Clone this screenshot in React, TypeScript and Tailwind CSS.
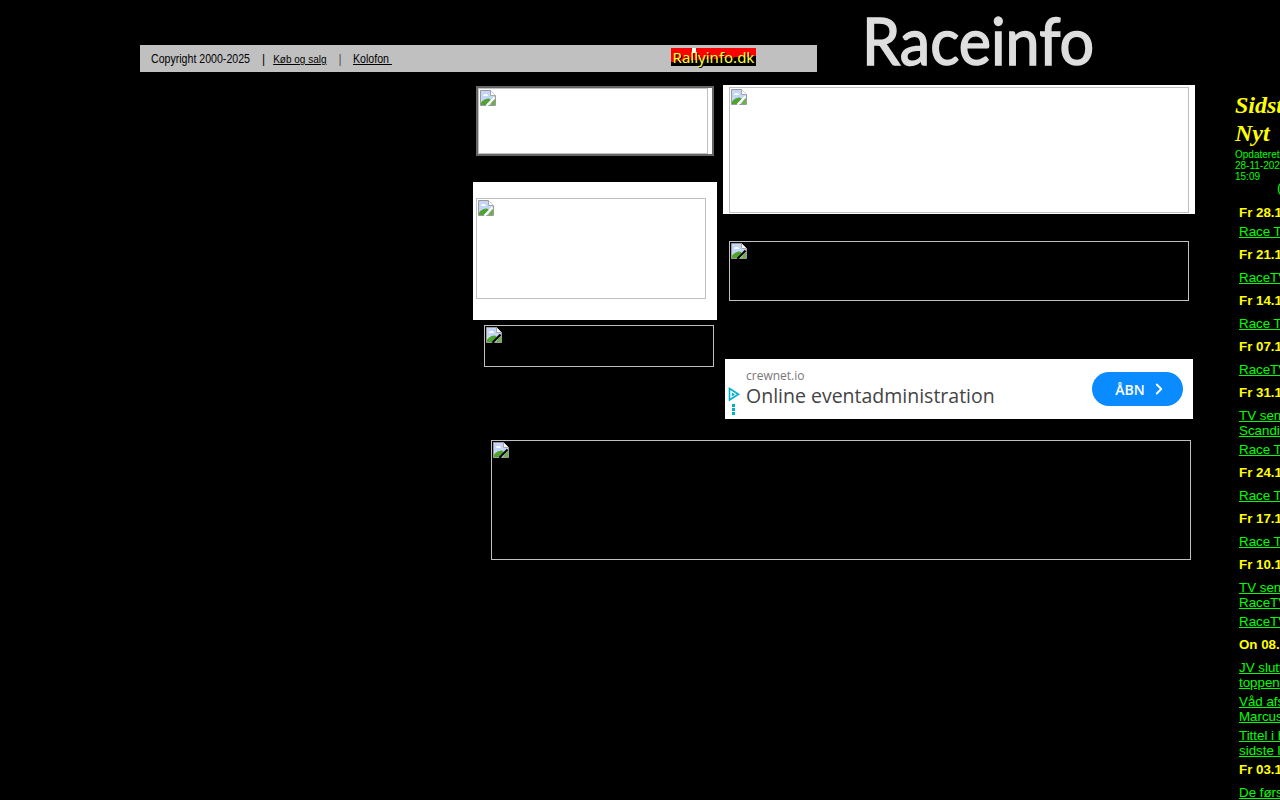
import { ChevronRight } from 'lucide-react';

// broken-image glyph, same one the browser paints for a missing picture
function MissingIcon({ className = '' }: { className?: string }) {
  return (
    <svg width="16" height="16" viewBox="0 0 16 16" className={className}>
      <path d="M0.5 0.5H10.5L15.5 5.5V15.5H0.5Z" fill="#c9d9f5" stroke="#9a9a9a" />
      <path d="M1 1H10V5H15V9H1Z" fill="#c3d6f8" />
      <path d="M10.5 0.5V5.5H15.5" fill="#fff" stroke="#a8a8a8" />
      <path d="M3 5.5c0-1 1-1.500 2-1.200 .8-.8 2.500-.4 2.500.7 .8 0 1 1 0 1H4c-.7 0-1-.2-1-.5Z" fill="#fff" />
      <path d="M1 15V12.500C3 10 6 8.500 9 8.500L11 10 6.500 15Z" fill="#4fa32f" />
      <path d="M13 10.500L15 9V15H10Z" fill="#6fb04d" />
      <path d="M6.500 15.800L14.500 7.500" stroke="currentColor" strokeWidth="2" />
    </svg>
  );
}

function MissingImage({ className }: { className: string }) {
  return (
    <div className={`border border-[#c0c0c0] pl-px pt-px ${className}`}>
      <MissingIcon />
    </div>
  );
}

type NewsRow = { text: string; date?: boolean; gap: string };

const news: NewsRow[] = [
  { text: 'Fr 28.11', date: true, gap: 'mt-0' },
  { text: 'Race TV', gap: 'mt-1' },
  { text: 'Fr 21.11', date: true, gap: 'mt-2' },
  { text: 'RaceTV', gap: 'mt-2' },
  { text: 'Fr 14.11', date: true, gap: 'mt-2' },
  { text: 'Race TV', gap: 'mt-2' },
  { text: 'Fr 07.11', date: true, gap: 'mt-2' },
  { text: 'RaceTV', gap: 'mt-2' },
  { text: 'Fr 31.10', date: true, gap: 'mt-2' },
  { text: 'TV sendes\nScandinavia', gap: 'mt-2' },
  { text: 'Race TV', gap: 'mt-1' },
  { text: 'Fr 24.10', date: true, gap: 'mt-2' },
  { text: 'Race TV', gap: 'mt-2' },
  { text: 'Fr 17.10', date: true, gap: 'mt-2' },
  { text: 'Race TV', gap: 'mt-2' },
  { text: 'Fr 10.10', date: true, gap: 'mt-2' },
  { text: 'TV sendes\nRaceTV', gap: 'mt-2' },
  { text: 'RaceTV', gap: 'mt-1' },
  { text: 'On 08.10', date: true, gap: 'mt-2' },
  { text: 'JV slutter\ntoppen', gap: 'mt-2' },
  { text: 'Våd afslutning\nMarcus', gap: 'mt-1' },
  { text: 'Tittel i hus\nsidste løb', gap: 'mt-1' },
  { text: 'Fr 03.10', date: true, gap: 'mt-1' },
  { text: 'De første', gap: 'mt-2' },
];

export default function App() {
  return (
    <div className="h-[800px] w-[1280px] overflow-hidden bg-black font-['Liberation_Sans',Arial,sans-serif]">
      <header className="flex h-[85px] items-start">
        <div className="ml-[140px] mt-[45px] flex h-[27px] w-[677px] items-center bg-[#c0c0c0] pl-[11px] text-black">
          <span className="w-[111px] origin-left scale-x-[0.795] whitespace-nowrap text-[13.33px]">Copyright 2000-2025</span>
          <span className="text-[12px]">|</span>
          <a className="ml-2 mt-0.5 text-[10px] underline">Køb og salg</a>
          <span className="ml-3 text-[12px] text-[#555555]">|</span>
          <a className="ml-[11px] origin-left scale-x-[0.795] whitespace-pre text-[13.33px] underline">Kolofon </a>
          <div className="relative ml-auto mr-[61px] mt-[3px] flex h-[18px] w-[85px] items-center justify-center self-start bg-[linear-gradient(176deg,#f00_58%,#000_58%)] font-['Noto_Sans',sans-serif] text-[15px] leading-none text-[#ffff33] [text-shadow:1px_1px_0_#000]">
            <span className="absolute left-[21px] top-0 h-[5px] w-[4px] bg-white" />
            <span className="relative">Rallyinfo.dk</span>
          </div>
        </div>
        <div className="ml-[45px] mt-[4px] origin-left scale-x-[0.925] font-['Lato',sans-serif] text-[66px] leading-[72px] text-[#dedede] [-webkit-text-stroke:1.5px_#dedede]">
          Raceinfo
        </div>
      </header>

      <div className="flex">
        <main className="ml-[473px] w-[722px]">
          <div className="grid grid-cols-[244px_472px] gap-x-[6px]">
            <div className="flex flex-col items-start">
              <div className="ml-[3px] mt-px h-[70px] w-[238px] border-2 border-[#666666] bg-white text-white">
                <MissingImage className="h-[66px] w-[230px]" />
              </div>
              <div className="mt-[26px] h-[138px] w-[244px] bg-white pl-[3px] pt-4 text-white">
                <MissingImage className="h-[101px] w-[230px]" />
              </div>
              <MissingImage className="ml-[11px] mt-[5px] h-[42px] w-[230px] text-black" />
            </div>

            <div className="flex flex-col items-start">
              <div className="h-[129px] w-[472px] bg-white pl-[6px] pt-[2px] text-white">
                <MissingImage className="h-[126px] w-[460px]" />
              </div>
              <MissingImage className="ml-[6px] mt-[27px] h-[60px] w-[460px] text-black" />

              <div className="ml-[2px] mt-[58px] flex h-[60px] w-[468px] items-center bg-white font-['Open_Sans',sans-serif]">
                <div className="flex w-[21px] flex-col items-start self-start pl-[3px] pt-[28px]">
                  <svg width="12" height="15" viewBox="0 0 12 15" fill="none">
                    <path d="M1.500 1.500V13L10.500 7.200Z" stroke="#00aecd" strokeWidth="1.600" />
                    <path d="M3.800 5.500V9.500L7 7.400Z" fill="#00aecd" />
                  </svg>
                  <div className="ml-[4px] mt-[2px] flex flex-col gap-px">
                    <span className="h-[3px] w-[3px] bg-[#00aecd]" />
                    <span className="h-[3px] w-[3px] bg-[#00aecd]" />
                    <span className="h-[3px] w-[3px] bg-[#00aecd]" />
                  </div>
                </div>
                <div className="flex-1 pb-[2px]">
                  <p className="text-[12px] leading-[16px] text-[#777777]">crewnet.io</p>
                  <p className="text-[19.5px] leading-[24px] text-[#444444]">Online eventadministration</p>
                </div>
                <div className="mr-[10px] flex h-[34px] w-[91px] items-center justify-center gap-[5px] rounded-full bg-[#0a8bff] pl-[8px] text-[14px] font-semibold text-white">
                  ÅBN
                  <ChevronRight size={18} strokeWidth={2.5} />
                </div>
              </div>
            </div>
          </div>

          <MissingImage className="ml-[18px] mt-[21px] h-[120px] w-[700px] text-black" />
        </main>

        <aside className="ml-[40px] w-[190px] shrink-0 pt-[6px]">
          <h2 className="font-['Liberation_Serif',serif] text-[24px] font-bold italic leading-[28px] text-[#ffff00]">
            Sidste
            <br />
            Nyt
          </h2>
          <p className="mt-[2px] text-[10px] leading-[11px] text-[#00ff00]">
            Opdateret
            <br />
            28-11-2025
            <br />
            15:09
          </p>
          <p className="-mt-[2px] pl-[42px] text-[13.33px] leading-[15px] text-[#00ff00]">(opdater)</p>
          <div className="mt-[10px] pl-[4px]">
            {news.map((row, i) =>
              row.date ? (
                <p key={i} className={`${row.gap} text-[13.33px] font-bold leading-[15px] text-[#ffff00]`}>
                  {row.text}
                </p>
              ) : (
                <a key={i} className={`${row.gap} block whitespace-pre-line text-[13.33px] leading-[15px] text-[#00ff00] underline`}>
                  {row.text}
                </a>
              ),
            )}
          </div>
        </aside>
      </div>
    </div>
  );
}
